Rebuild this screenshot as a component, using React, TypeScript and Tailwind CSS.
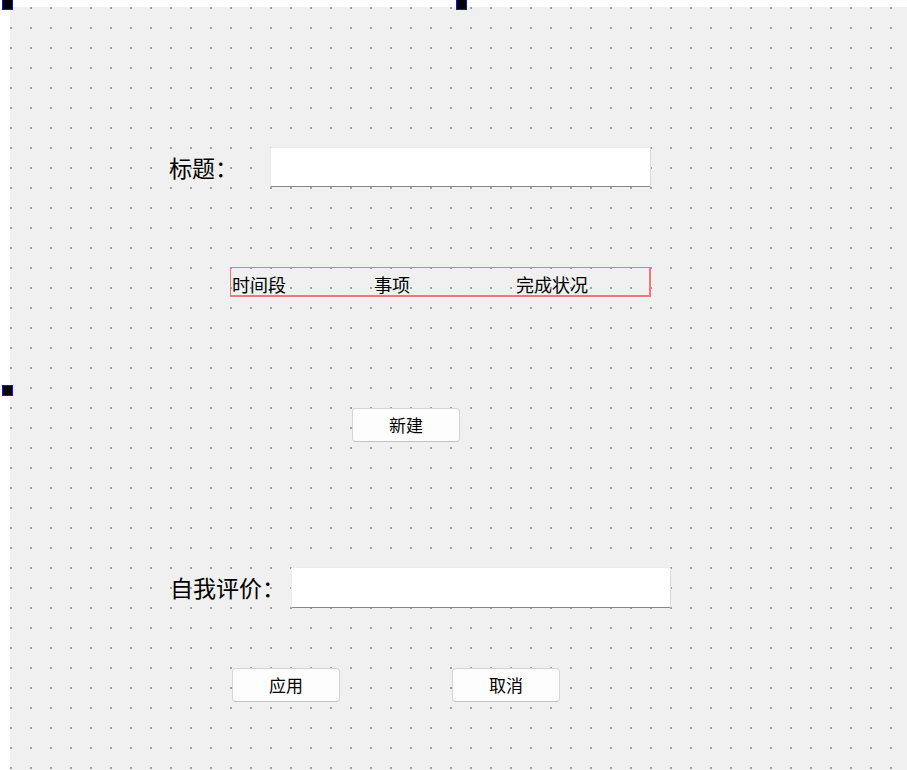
import React from "react";

const font = { fontFamily: '"Noto Sans CJK SC", "Noto Sans", sans-serif' };

function Handle({ className }: { className: string }) {
  return (
    <div className={`absolute w-[11px] h-[11px] bg-black border border-[#1010ff] ${className}`} />
  );
}

function PushButton({ label }: { label: string }) {
  return (
    <button className="w-[108px] h-[34px] bg-[#fdfdfd] border border-[#d4d4d4] border-b-[#c2c2c2] rounded-[4px] text-[17px] text-black flex items-center justify-center">
      {label}
    </button>
  );
}

function LineEdit({ width, height }: { width: string; height: string }) {
  return (
    <div
      className={`${width} ${height} bg-white border border-[#ececec] border-r-[#dcdcdc] border-b-[#878787] rounded-[2px]`}
    />
  );
}

export default function App() {
  return (
    <div
      className="relative w-[907px] h-[770px] bg-white overflow-hidden pl-[10px] pt-[7px] flex"
      style={font}
    >
      <div className="relative flex-1 bg-[#f0f0f0]">
        {/* designer grid */}
        <svg className="absolute inset-0 w-full h-full pointer-events-none">
          <defs>
            <pattern id="grid" width="20" height="20" patternUnits="userSpaceOnUse">
              <rect x="0" y="0" width="2" height="2" fill="#a0a0a0" />
            </pattern>
          </defs>
          <rect width="100%" height="100%" fill="url(#grid)" />
        </svg>

        <div className="relative flex flex-col">
          <div className="mt-[140px] flex items-center">
            <div className="ml-[159px] w-[101px] text-[23px] leading-none text-black">标题：</div>
            <LineEdit width="w-[381px]" height="h-[40px]" />
          </div>

          <div className="mt-[80px] ml-[220px] w-[421px] h-[30px] border border-[#f07878] border-r-2 border-b-2 flex items-center pl-[1px] pt-[4px] text-[18px] leading-none text-black">
            <span className="w-[142px]">时间段</span>
            <span className="w-[142px]">事项</span>
            <span>完成状况</span>
          </div>

          <div className="mt-[111px] ml-[342px]">
            <PushButton label="新建" />
          </div>

          <div className="mt-[125px] flex items-center">
            <div className="ml-[160px] w-[121px] text-[23px] leading-none text-black">自我评价：</div>
            <LineEdit width="w-[380px]" height="h-[41px]" />
          </div>

          <div className="mt-[60px] ml-[222px] flex gap-[112px]">
            <PushButton label="应用" />
            <PushButton label="取消" />
          </div>
        </div>
      </div>

      <Handle className="left-[2px] top-[-1px]" />
      <Handle className="left-[456px] top-[-1px]" />
      <Handle className="left-[2px] top-[385px]" />
    </div>
  );
}
